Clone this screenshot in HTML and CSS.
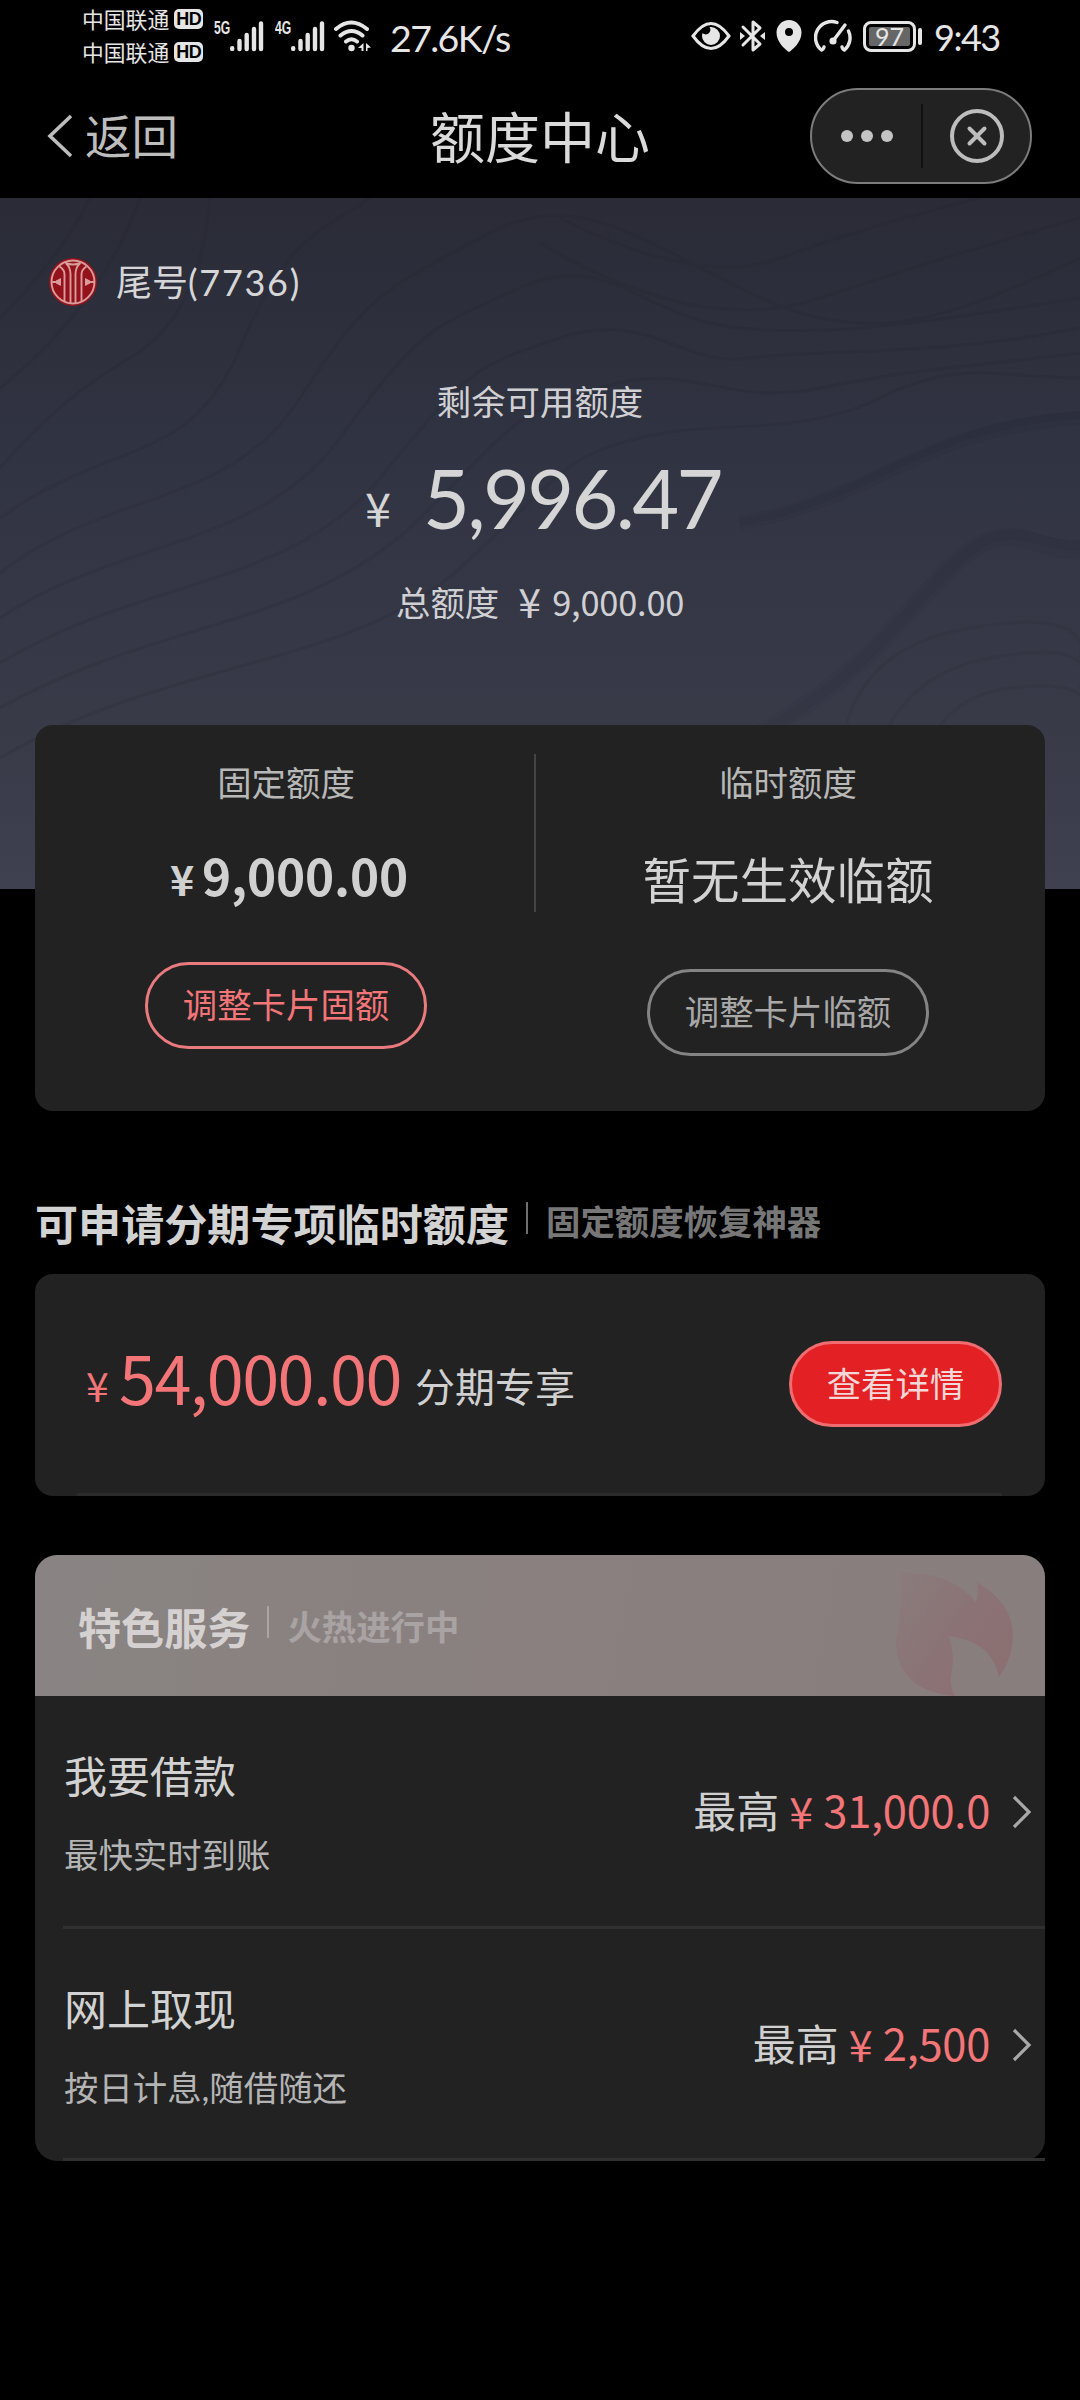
FILE: index.html
```html
<!DOCTYPE html>
<html lang="zh-CN">
<head>
<meta charset="utf-8">
<title>额度中心</title>
<link rel="stylesheet" href="styles.css">
</head>
<body>
<div class="status">
  <div class="carriers">
    <div class="carrier">中国联通<span class="hd">HD</span></div>
    <div class="carrier">中国联通<span class="hd">HD</span></div>
  </div>
  <div class="signal"><span class="gen">5G</span>
    <svg width="36" height="32" viewBox="0 0 36 32" stroke="#e6e6e6" stroke-width="4.4" stroke-linecap="round"><path d="M3.2 28.3v.6M10.5 21v8M17.7 15v14M25 9v20M32 3.5V29"/></svg>
  </div>
  <div class="signal second"><span class="gen">4G</span>
    <svg width="36" height="32" viewBox="0 0 36 32" stroke="#e6e6e6" stroke-width="4.4" stroke-linecap="round"><path d="M3.2 28.3v.6M10.5 21v8M17.7 15v14M25 9v20M32 3.5V29"/></svg>
  </div>
  <svg class="wifi" width="40" height="32" viewBox="0 0 40 32" fill="none" stroke="#e6e6e6" stroke-width="4" stroke-linecap="round"><path d="M3 9Q18 -4 34 9M7.500 15.500Q18.500 6.500 29.500 15.500M13 21.500Q18.500 17 24 21.500"/><circle cx="18.500" cy="28" r="3.200" fill="#e6e6e6" stroke="none"/><path fill="#e6e6e6" stroke="none" d="M30.500 23v8h-2v-3h-3.500zM33 23l5 4.500-3.500.500v3H33z"/></svg>
  <div class="speed">27.6K/s</div>
  <svg class="eye" width="40" height="30" viewBox="0 0 40 30" fill="none" stroke="#e6e6e6" stroke-width="3"><path d="M2 15Q20-10 38 15Q20 40 2 15z"/><path fill="#e6e6e6" stroke="none" d="M20 6a9 9 0 1 1-9 9c0-1 .2-2 .6-3 4 4 10-1 7-6z"/></svg>
  <svg class="bt" width="26" height="34" viewBox="0 0 26 34" fill="none" stroke="#e6e6e6" stroke-width="3" stroke-linejoin="round" stroke-linecap="round"><path d="M3 8l17 17-7 6V3l7 6L3 26"/><path fill="#e6e6e6" stroke="none" d="M0 13l5 4-5 4zM25 13l-5 4 5 4z"/></svg>
  <svg class="pin" width="26" height="32" viewBox="0 0 26 32"><path fill="#e6e6e6" fill-rule="evenodd" d="M13 0a12.500 12.500 0 0 1 12.500 12.500C25.500 22 17 29 14 31.500q-1 .6-2 0C9 29 .5 22 .5 12.500A12.500 12.500 0 0 1 13 0zm0 8a4 4 0 1 0 0 8 4 4 0 0 0 0-8z"/></svg>
  <svg class="gauge" width="38" height="34" viewBox="0 0 38 34" fill="none" stroke="#e6e6e6" stroke-width="3.400" stroke-linecap="round"><path d="M23 3.500A16 16 0 0 0 7.500 31q2-.5 2.500-3M34.500 12a16 16 0 0 1-4 19q-2-.5-2.500-3"/><path d="M19 22L31 6"/><circle cx="19" cy="22" r="3.600" fill="#e6e6e6" stroke="none"/></svg>
  <div class="battery"><span>97</span></div><i class="nub"></i>
  <div class="clock">9:43</div>
</div>

<div class="nav">
  <div class="back">
    <svg width="26" height="44" viewBox="0 0 26 44" fill="none" stroke="#bdbdbd" stroke-width="3.600"><path d="M24 2L3 22l21 20"/></svg>
    返回</div>
  <div class="title">额度中心</div>
  <div class="capsule">
    <div class="dots"><i></i><i></i><i></i></div>
    <div class="close"><svg width="56" height="56" viewBox="0 0 56 56" fill="none" stroke="#bdbdbd" stroke-width="4"><circle cx="28" cy="28" r="25"/><path stroke-linecap="round" d="M20.500 20.500l15 15m0-15l-15 15"/></svg></div>
  </div>
</div>

<div class="hero">
  <svg class="waves" width="1080" height="691" viewBox="0 0 1080 691" fill="none" stroke="#1c1c26" stroke-opacity=".13" stroke-width="3">
    <path d="M0 120Q60 60 90 0M0 190Q100 110 140 0M0 270Q60 200 130 160T210 0M0 320C110 240 190 270 240 150S330 30 370 0M0 375C110 290 230 310 300 200S390 90 480 40 620 30 740 90 930 130 1080 60M0 420C120 340 260 350 340 240S430 130 520 90 640 120 740 130 950 120 1080 100M0 465C140 380 290 390 380 280S470 170 560 140 680 170 750 160 930 160 1080 130M0 510C160 420 310 430 420 320S510 220 600 190 720 210 820 190 960 170 1080 155M0 560C170 460 350 470 460 370S560 260 640 240 800 240 880 200 1000 180 1080 180M540 45Q700 140 820 100T1080 20M560 20Q700 90 780 60T980 0"/>
    <g stroke-opacity=".05"><path stroke-width="18" d="M690 570C850 500 890 430 950 370S1030 355 1080 352"/><path stroke-width="10" d="M690 570C850 500 890 430 950 370S1030 350 1080 347"/>
    <path stroke-width="14" d="M740 325C880 300 920 230 1080 220"/><path stroke-width="7" d="M740 325C880 298 920 228 1080 217"/></g>
    <path stroke-opacity=".09" d="M840 560Q850 450 970 430T1080 460M870 600Q880 480 990 460T1080 490M910 620Q920 500 1010 490T1080 520"/>
  </svg>
  <div class="account">
    <svg width="50" height="50" viewBox="0 0 50 50" fill="none"><circle cx="25" cy="25" r="24" fill="#93121c"/><g stroke="#d99c9a" stroke-width="1.900"><circle cx="25" cy="25" r="21.500"/><path d="M11.500 9.500q5 3 5 8v27M38.500 9.500q-5 3-5 8v27M17.500 6q5 4 5 11v29M32.500 6q-5 4-5 11v29M17.500 6q7.500 3 15 0M4 25h5M46 25h-5"/></g><path fill="#d99c9a" d="M8 23.500l5-2.500v8l-5-2.500zM42 23.500l-5-2.500v8l5-2.500z"/></svg>
    <span>尾号<span class="tail">(7736)</span></span>
  </div>
  <div class="avail-label">剩余可用额度</div>
  <div class="avail"><span class="yen">¥</span><span class="num">5,996.47</span></div>
  <div class="total">总额度<span class="yen">¥</span><span class="num">9,000.00</span></div>
</div>

<div class="limits">
  <div class="col fixed">
    <div class="label">固定额度</div>
    <div class="value"><span class="yen">¥</span>9,000.00</div>
    <div class="btn red">调整卡片固额</div>
  </div>
  <div class="vline"></div>
  <div class="col temp">
    <div class="label">临时额度</div>
    <div class="value">暂无生效临额</div>
    <div class="btn">调整卡片临额</div>
  </div>
</div>

<div class="heading"><b>可申请分期专项临时额度</b><i></i><span>固定额度恢复神器</span></div>

<div class="special">
  <span class="yen">¥</span><span class="num">54,000.00</span><span class="desc">分期专享</span>
  <div class="btn solid">查看详情</div>
</div>

<div class="services">
  <div class="banner">
    <div class="heading"><b>特色服务</b><i></i><span>火热进行中</span></div>
    <svg class="flame" width="120" height="132" viewBox="0 0 120 132"><defs><linearGradient id="ember" x1="0" y1="0" x2="1" y2=".7"><stop offset="0" stop-color="#8c6d70" stop-opacity=".15"/><stop offset=".6" stop-color="#8c6d70" stop-opacity=".7"/><stop offset="1" stop-color="#8c6d70" stop-opacity=".85"/></linearGradient></defs><path fill="url(#ember)" d="M6 10Q54 6 82 38Q85 29 83 18Q119 40 119 71Q119 94 105 113Q98 77 54 72Q62 88 57 112Q56 124 61 132Q2 127 2 76Q9 42 6 10z"/></svg>
  </div>
  <div class="row">
    <div class="info"><div class="name">我要借款</div><div class="sub">最快实时到账</div></div>
    <div class="max">最高<span class="yen">¥</span><span class="num">31,000.0</span></div>
    <svg class="chev" width="20" height="34" viewBox="0 0 20 34" fill="none" stroke="#a8a8a8" stroke-width="3.200"><path d="M2 2l15 15L2 32"/></svg>
  </div>
  <div class="row">
    <div class="info"><div class="name">网上取现</div><div class="sub">按日计息,随借随还</div></div>
    <div class="max">最高<span class="yen">¥</span><span class="num">2,500</span></div>
    <svg class="chev" width="20" height="34" viewBox="0 0 20 34" fill="none" stroke="#a8a8a8" stroke-width="3.200"><path d="M2 2l15 15L2 32"/></svg>
  </div>
</div>
</body>
</html>
```
FILE: styles.css
```css
* { box-sizing: border-box; }
body {
  margin: 0;
  width: 1080px;
  height: 2400px;
  background: #000;
  color: #d2d2d2;
  font-family: Lato, "Noto Sans CJK SC", sans-serif;
  white-space: nowrap;
  overflow: hidden;
}
svg { display: block; flex: none; }
i { display: block; flex: none; }
.yen, .num { flex: none; font-family: "Noto Sans CJK SC", sans-serif; }

.status { display: flex; height: 76px; padding-left: 82px; color: #e6e6e6; }
.carriers { width: 132px; padding-top: 2px; }
.carrier { display: flex; align-items: center; height: 33px; font-size: 21.800px; }
.hd {
  margin-left: 5px; width: 29px; height: 20px; border-radius: 5px;
  background: #e6e6e6; color: #000; font: bold 18px/20px "Liberation Sans", sans-serif;
  text-align: center; letter-spacing: -.5px;
}
.signal { display: flex; width: 61px; padding-top: 20px; }
.gen { width: 15px; font: bold 19px/15px "Liberation Sans", sans-serif; transform: scaleX(.64); transform-origin: 0 0; }
.wifi { margin: 20px 0 0 -3px; }
.speed { width: 319px; padding-left: 17px; font-size: 37.500px; line-height: 75px; letter-spacing: -1.600px; }
.eye { margin: 21px 0 0 -1px; }
.bt { margin: 19px 0 0 9px; }
.pin { margin: 20px 0 0 10px; }
.gauge { margin: 19px 0 0 12px; }
.battery {
  margin: 21px 0 0 11px; padding: 3px; width: 53px; height: 31px;
  border: 3px solid #e6e6e6; border-radius: 8px;
}
.battery span {
  display: block; height: 19px; background: #666; border-radius: 2px;
  font-size: 25px; line-height: 19px; text-align: center;
}
.nub { margin: 28px 0 0 2px; width: 4px; height: 17px; border-radius: 2px; background: #e6e6e6; }
.clock { margin-left: 12px; font-size: 36px; line-height: 75px; letter-spacing: -1.500px; }

.nav {
  display: grid; grid-template-columns: 310px 1fr 270px;
  height: 122px; align-items: center; padding: 11px 48px 15px 47px;
}
.back { display: flex; align-items: center; gap: 12px; height: 96px; font-size: 46.500px; color: #bdbdbd; line-height: 92px; margin-top: 1px; }
.title { height: 96px; font-size: 55px; line-height: 98px; padding-left: 73px; color: #dadada; }
.capsule {
  display: flex; justify-self: end; width: 222px; height: 96px;
  border: 2px solid #7c7c7c; border-radius: 48px; background: #222;
}
.dots { display: flex; width: 111px; align-items: center; justify-content: center; gap: 8px; border-right: 2px solid #111; margin: 14px 0; }
.dots i { width: 12px; height: 12px; border-radius: 50%; background: #c4c4c4; }
.close { flex: 1; display: flex; align-items: center; justify-content: center; }

.hero {
  position: relative; height: 691px; text-align: center;
  background: linear-gradient(#2a2b37, #303341 35%, #393b49 80%, #3f4150);
}
.waves { position: absolute; left: 0; top: 0; }
.account { position: relative; display: flex; align-items: center; padding: 59px 0 0 48px; height: 109px; font-size: 36px; line-height: 48px; color: #d6d6d8; }
.account > span { margin: -1px 0 0 18px; }
.tail { letter-spacing: 1.700px; }
.avail-label { position: relative; margin-top: 70px; font-size: 34.400px; line-height: 50px; color: #d0d0d4; }
.avail { position: relative; display: flex; align-items: baseline; padding-left: 365px; margin-top: 17px; height: 108px; line-height: 108px; color: #d5d5d5; }
.avail .yen { width: 58px; text-align: left; font-size: 47px; position: relative; top: -2px; }
.avail .num { font: 81px/108px Lato, sans-serif; letter-spacing: -2.700px; }
.total { position: relative; display: flex; align-items: center; height: 50px; padding-left: 396px; margin-top: 26px; font-size: 34.400px; line-height: 50px; color: #d0d0d4; }
.total .yen { margin: -6px 0 0 19px; width: 34px; font-size: 41px; text-align: left; }
.total .num { font-size: 34.400px; letter-spacing: -.200px; margin-top: -4px; }

.limits {
  position: relative; display: flex; width: 1010px; height: 386px; margin: -164px 0 0 35px;
  padding-right: 6px; background: #222; border-radius: 18px;
}
.col { flex: 1; display: flex; flex-direction: column; align-items: center; }
.vline { width: 2px; height: 158px; margin: 29px 1px 0 -3px; background: #444; }
.label { margin-top: 33px; font-size: 34.400px; line-height: 50px; color: #b8b8b8; }
.value { margin-top: 33px; line-height: 80px; }
.fixed .value { height: 72px; font: 700 49.500px/67px "Noto Sans CJK SC", sans-serif; color: #d0d0d0; padding-left: 6px; letter-spacing: -.200px; }
.fixed .yen { font-size: 41px; margin-right: 8px; }
.temp .value { font-size: 48.500px; line-height: 79px; height: 80px; }
.btn {
  margin-top: 48px; width: 282px; height: 87px; border: 3px solid #848484; border-radius: 44px;
  font-size: 34.400px; line-height: 80px; text-align: center; color: #a8a8a8;
}
.fixed .btn { margin-top: 49px; }
.btn.red { color: #f37578; border-color: #e97a7e; }

.heading { display: flex; align-items: center; }
.heading b { font-size: 43.100px; line-height: 50px; }
.heading i { width: 2px; height: 32px; margin: -12px 18px 0 17px; background: #707070; }
.heading span { font-size: 34.400px; line-height: 50px; font-weight: 700; color: #777; margin-top: -4px; }
body > .heading { margin: 88px 0 0 35px; height: 50px; }

.special {
  display: flex; width: 1010px; height: 222px; margin: 25px 0 0 35px; padding: 60px 43px 0 51px;
  line-height: 92px; background: linear-gradient(#2b2b2b, #2b2b2b) 42px 219px / 925px 3px no-repeat #222; border-radius: 18px; color: #f37578;
}
.special .yen { width: 33px; font-size: 41px; padding-top: 4px; }
.special .num { width: 296px; font-size: 66.500px; letter-spacing: -1.500px; margin-top: -4px; }
.special .desc { font-size: 40px; color: #d0d0d0; padding-top: 7px; }
.btn.solid { margin: 7px 0 0 auto; width: 213px; height: 86px; line-height: 79px; background: #e32124; border-color: #ef6d70; color: #f4d8d8; }

.services { width: 1010px; height: 606px; margin: 59px 0 0 35px; border-radius: 22px; background: #222; }
.banner {
  display: flex; justify-content: space-between; height: 141px; padding: 9px 31px 0 43px;
  border-radius: 22px 22px 0 0; background: linear-gradient(100deg, #898483, #897f7e 60%, #897e7e);
}
.banner .heading { height: 128px; }
.banner .heading b { color: #d6d1d1; }
.banner .heading i { background: #aaa4a4; }
.banner .heading span { color: #aaa3a3; margin-top: -2px; }
.row { display: flex; height: 232px; margin-left: 28px; padding: 56px 13px 0 1px; border-bottom: 3px solid #303030; }
.row:nth-child(2) { height: 233px; }
.info { flex: 1; }
.name { font-size: 43px; line-height: 50px; }
.sub { font-size: 34.400px; line-height: 50px; margin-top: 28px; color: #b4b4b4; }
.max { display: flex; font-size: 43px; line-height: 50px; margin-top: 35px; color: #d0d0d0; height: 50px; }
.max .yen, .max .num { color: #f37578; margin-top: -2px; }
.max .yen { width: 34px; margin-left: 10px; font-size: 43px; }
.max .num { font-size: 43.500px; letter-spacing: -.300px; }
.chev { margin: 43px 0 0 22px; }
```
